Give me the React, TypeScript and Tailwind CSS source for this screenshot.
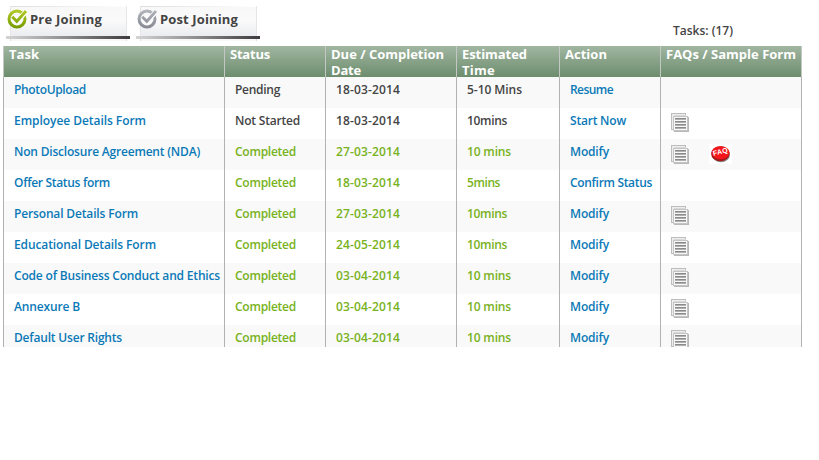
import { useLayoutEffect, useRef, useState } from "react";

/* Text set to a given width by adjusting its tracking. */
function Fit({ text, width }: { text: string; width: number }) {
  const ref = useRef<HTMLSpanElement>(null);
  const [spacing, setSpacing] = useState(0);
  useLayoutEffect(() => {
    if (!ref.current) return;
    const natural = ref.current.getBoundingClientRect().width;
    setSpacing((width - natural) / text.length);
  }, [text, width]);
  return (
    <span ref={ref} className="inline-block whitespace-nowrap" style={{ letterSpacing: spacing }}>
      {text}
    </span>
  );
}

type Label = [string, number];
type Row = { task: Label; status: Label; date: string; time: Label; action: Label; form?: boolean; faq?: boolean };

const done: Label = ["Completed", 61];
const modify: Label = ["Modify", 39];

const rows: Row[] = [
  { task: ["PhotoUpload", 72], status: ["Pending", 45], date: "18-03-2014", time: ["5-10 Mins", 55], action: ["Resume", 43] },
  { task: ["Employee Details Form", 132], status: ["Not Started", 65], date: "18-03-2014", time: ["10mins", 40], action: ["Start Now", 56], form: true },
  { task: ["Non Disclosure Agreement (NDA)", 186], status: done, date: "27-03-2014", time: ["10 mins", 44], action: modify, form: true, faq: true },
  { task: ["Offer Status form", 96], status: done, date: "18-03-2014", time: ["5mins", 33], action: ["Confirm Status", 82] },
  { task: ["Personal Details Form", 124], status: done, date: "27-03-2014", time: ["10mins", 40], action: modify, form: true },
  { task: ["Educational Details Form", 142], status: done, date: "24-05-2014", time: ["10mins", 40], action: modify, form: true },
  { task: ["Code of Business Conduct and Ethics", 206], status: done, date: "03-04-2014", time: ["10 mins", 44], action: modify, form: true },
  { task: ["Annexure B", 66], status: done, date: "03-04-2014", time: ["10 mins", 44], action: modify, form: true },
  { task: ["Default User Rights", 108], status: done, date: "03-04-2014", time: ["10 mins", 44], action: modify, form: true },
];

const headers: Label[][] = [
  [["Task", 30]],
  [["Status", 40]],
  [["Due / Completion", 113], ["Date", 30]],
  [["Estimated", 65], ["Time", 33]],
  [["Action", 42]],
  [["FAQs / Sample Form", 130]],
];

const grid = "grid grid-cols-[221px_101px_131px_103px_101px_142px]";

function FormIcon() {
  return (
    <svg width="18" height="19" viewBox="0 0 18 19" shapeRendering="crispEdges">
      <path d="M.5.5h14v16H.5z" fill="#eee" stroke="#bdbdbd" />
      <path d="M2.5 2.5h12" stroke="#d8d8d8" />
      <path d="M2.5 3.5h14v14h-14z" fill="#f7f7f7" stroke="#c4c4c4" />
      <path d="M17.5 4v14.5H3" fill="none" stroke="#b8b8b8" />
      <path d="M4 5h11v1H4zM4 8h11v1H4zM4 11h11v1H4zM4 14h11v1H4z" fill="#8b8b8b" />
      <path d="M4 6h11v1H4zM4 9h11v1H4zM4 12h11v1H4zM4 15h11v1H4z" fill="#b0b0b0" />
    </svg>
  );
}

function FaqIcon() {
  return (
    <svg width="23" height="20" viewBox="0 0 23 20">
      <path d="M0 0h23v20H0z" fill="#fff" />
      <ellipse cx="12" cy="10.8" rx="9" ry="7.4" fill="#8a8a8a" />
      <ellipse cx="11.3" cy="9.8" rx="9.2" ry="7.5" fill="#a5181a" />
      <ellipse cx="11.6" cy="8.7" rx="8.9" ry="6.5" fill="#f5161b" />
      <text x="4" y="10.2" transform="rotate(-13 11 9)" fill="#fff" fontSize="7" fontWeight="700" fontFamily="Liberation Sans, sans-serif" textLength="15">FAQ</text>
    </svg>
  );
}

function CheckIcon({ active }: { active: boolean }) {
  const id = active ? "check-on" : "check-off";
  return (
    <svg width="21" height="21" viewBox="0 0 21 21" fill="none">
      <defs>
        <linearGradient id={id} x1="0" y1="0" x2="0" y2="21" gradientUnits="userSpaceOnUse">
          <stop stopColor={active ? "#bad02a" : "#b6b9bf"} />
          <stop offset="1" stopColor={active ? "#719900" : "#858891"} />
        </linearGradient>
      </defs>
      <circle cx="10" cy="11" r="8" stroke={`url(#${id})`} strokeWidth="3" />
      <path d="M5.6 9.4l4.3 4.2L18.8 3.6" stroke="#fff" strokeWidth="5" />
      <path d="M5.2 8.8l4.6 4.6L19 3" stroke={`url(#${id})`} strokeWidth="3" />
    </svg>
  );
}

function Tab({ text, width, active }: { text: string; width: number; active: boolean }) {
  return (
    <div className="flex h-[35px] w-[124px] flex-col">
      <div className="relative ml-1 flex h-[30px] w-[117px] border-x border-[#e6e6e8] bg-linear-to-b from-[#f8f8f9] via-[#fafafb] to-[#ebecf0]">
        <span className="absolute top-0 left-0 h-px w-full bg-linear-to-r from-[#dedede] to-white" />
        <span className="-ml-[4px] mt-[2px] h-[21px] w-[21px] shrink-0"><CheckIcon active={active} /></span>
        <span className="ml-[2px] mt-[4px] text-[13px] leading-[18px] font-bold text-[#444]"><Fit text={text} width={width} /></span>
      </div>
      <div className="h-[3px] bg-linear-to-r from-[#d4d4d4] via-[#8c8c8e] to-[#3f3b40]" />
      <div className="ml-1 h-[2px] w-[117px] border-x border-[#ddd] bg-[#f8f8f8]" />
    </div>
  );
}

export default function App() {
  return (
    <main className="h-[460px] w-[819px] overflow-hidden bg-white font-['Open_Sans','Noto_Sans',sans-serif] text-[#444]">
      <header className="flex h-[46px] pt-[6px] pl-[6px]">
        <Tab text="Pre Joining" width={72} active />
        <div className="w-[6px]" />
        <Tab text="Post Joining" width={78} active={false} />
        <div className="mt-[16px] ml-[413px] text-[12px] leading-[18px] font-semibold"><Fit text="Tasks: (17)" width={60} /></div>
      </header>
      <section className="ml-[3px] h-[301px] w-[799px] overflow-hidden">
        <div className={`${grid} h-[31px] bg-linear-to-b from-[#a1b6a1] to-[#6d8d6e] text-[13px] leading-4 font-bold text-white`}>
          {headers.map((lines, i) => (
            <div key={i} className="border-l border-[#c4c8c4] pl-[5px] last:border-r">
              {lines.map(([text, width]) => (
                <div key={text} className="h-4"><Fit text={text} width={width} /></div>
              ))}
            </div>
          ))}
        </div>
        {rows.map((row) => {
          const cell = "border-l border-[#b2b2b2] pl-[10px] pt-[4px]";
          const tone = row.status[0] === "Completed" ? "text-[#78b21c]" : "text-[#444]";
          return (
            <div key={row.task[0]} className={`${grid} h-[31px] text-[12px] leading-[18px] font-semibold odd:bg-white even:bg-[#f9f9f9]`}>
              <div className={`${cell} text-[#0b79b7]`}><Fit text={row.task[0]} width={row.task[1]} /></div>
              <div className={`${cell} ${tone}`}><Fit text={row.status[0]} width={row.status[1]} /></div>
              <div className={`${cell} ${tone}`}><Fit text={row.date} width={64} /></div>
              <div className={`${cell} ${tone}`}><Fit text={row.time[0]} width={row.time[1]} /></div>
              <div className={`${cell} text-[#0b79b7]`}><Fit text={row.action[0]} width={row.action[1]} /></div>
              <div className="flex items-start gap-[20px] border-x border-[#b2b2b2] pl-[10px]">
                {row.form && <span className={row.faq ? "mt-[6px]" : "mt-[5px]"}><FormIcon /></span>}
                {row.faq && <span className="mt-[5px]"><FaqIcon /></span>}
              </div>
            </div>
          );
        })}
      </section>
    </main>
  );
}
